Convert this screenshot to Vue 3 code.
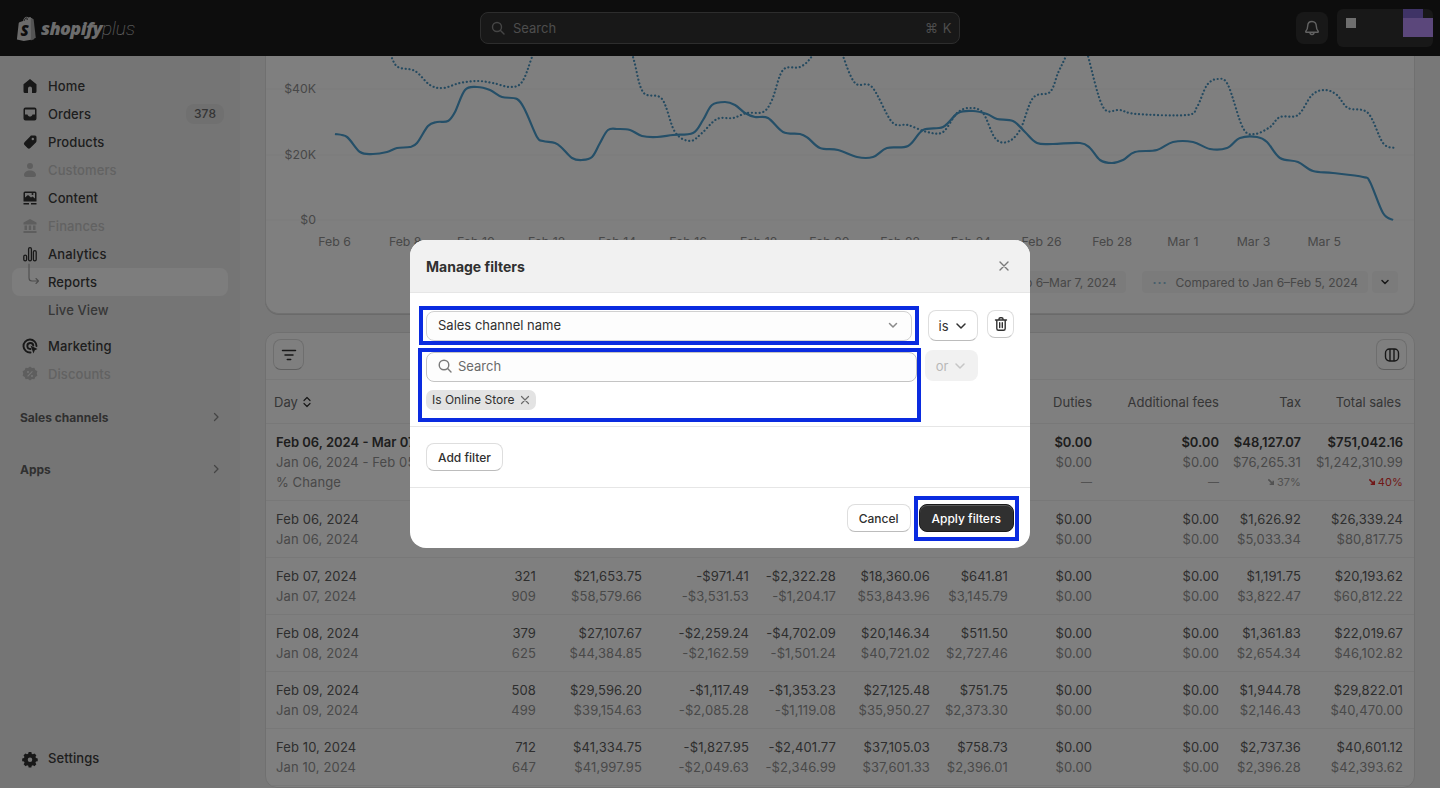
<template>
  <div class="app">
    <header class="topbar">
      <div class="logo">
        <svg class="logo-bag" width="22" height="25" viewBox="0 0 22 25">
          <path d="M3.4 6.2 7 5c.6-2.500 2-4.300 3.800-4.300.7 0 1.200.3 1.600.8l1.600-.4c.6 0 .9.300 1.100 1l.8.1c.3 0 .5.200.6.500L18 23.300 7.800 25 .9 23.600 2.700 7.300c.1-.6.300-.9.700-1.100z" fill="#d6d6d6" />
          <path d="M14.800 2.200 17.600 3.300 19.800 21.800 14.900 24.400z" fill="#a8a8a8" />
          <path d="M8.200 4.800c.4-1.600 1.300-2.900 2.400-2.900M11.200 4c0-1-.1-1.700-.4-2.300" fill="none" stroke="#0d0d0d" stroke-width=".8" />
          <text x="4.600" y="20" class="logo-s">S</text>
        </svg>
        <span class="logo-main">shopify</span><span class="logo-plus">plus</span>
      </div>
      <div class="search">
        <svg width="16" height="16" viewBox="0 0 16 16" fill="none" stroke="#8a8a8a" stroke-width="1.400">
          <circle cx="7" cy="7" r="4.500" />
          <path d="M10.500 10.500 14 14" stroke-linecap="round" />
        </svg>
        <span class="search-text">Search</span>
        <span class="search-keys">⌘ K</span>
      </div>
      <div class="top-right">
        <button class="bell">
          <svg width="18" height="18" viewBox="0 0 18 18" fill="none" stroke="#c4c4c4" stroke-width="1.400">
            <path d="M9 2.500c-2.700 0-4.300 2-4.300 4.500 0 2.700-.7 3.900-1.900 5.300-.3.400-.1.900.4.900h11.600c.5 0 .7-.5.4-.9-1.200-1.400-1.900-2.600-1.900-5.300 0-2.500-1.600-4.500-4.300-4.500z" stroke-linejoin="round" />
            <path d="M7 13.500c0 1.200.8 2 2 2s2-.8 2-2" />
          </svg>
        </button>
        <div class="store">
          <span class="store-dot"></span>
          <span class="store-avatar"><i></i><b></b></span>
        </div>
      </div>
    </header>

    <div class="page">
      <aside class="sidebar">
        <nav class="nav">
          <div
            v-for="item in navItems"
            :key="item.label"
            class="nav-item"
            :class="[item.kind, { dim: item.dim, active: item.active }]"
          >
            <svg v-if="item.icon" class="nav-icon" width="20" height="20" viewBox="0 0 20 20">
              <path
                v-for="(p, i) in icons[item.icon]"
                :key="i"
                :d="p.d"
                fill-rule="evenodd"
                :fill="p.line ? 'none' : 'currentColor'"
                :stroke="p.line ? 'currentColor' : 'none'"
                :stroke-width="p.line ? p.line : 0"
                stroke-linecap="round"
                stroke-linejoin="round"
              />
            </svg>
            <span v-else-if="item.kind !== 'section'" class="nav-icon"></span>
            <span class="nav-label">{{ item.label }}</span>
            <span v-if="item.badge" class="nav-badge">{{ item.badge }}</span>
            <svg v-if="item.kind === 'section'" class="nav-chevron" width="12" height="12" viewBox="0 0 12 12" fill="none" stroke="currentColor" stroke-width="1.300">
              <path d="M4.500 2.500 8 6 4.500 9.500" stroke-linecap="round" stroke-linejoin="round" />
            </svg>
          </div>
        </nav>
        <div class="nav-item settings">
          <svg class="nav-icon" width="20" height="20" viewBox="-1 -1.500 22 22">
            <path :d="gear" fill="currentColor" fill-rule="evenodd" />
          </svg>
          <span class="nav-label">Settings</span>
        </div>
      </aside>

      <main class="main">
        <section class="card chart-card">
          <svg class="chart" width="1150" height="196" viewBox="265 56 1150 196">
            <line v-for="t in yTicks" :key="t.label" x1="265" x2="1415" :y1="t.y" :y2="t.y" class="grid-line" />
            <text v-for="t in yTicks" :key="'l' + t.label" x="316" :y="t.y + 3.500" text-anchor="end" class="axis">{{ t.label }}</text>
            <text v-for="t in xTicks" :key="t.label" :x="t.x" y="246" text-anchor="middle" class="axis">{{ t.label }}</text>
            <path :d="prevPath" class="line-prev" />
            <path :d="currPath" class="line-curr" />
          </svg>
          <div class="legend">
            <span class="legend-pill"><i class="dash"></i>Feb 6–Mar 7, 2024</span>
            <span class="legend-pill"><i class="dots">···</i>Compared to Jan 6–Feb 5, 2024</span>
            <span class="legend-more">
              <svg width="12" height="12" viewBox="0 0 12 12" fill="none" stroke="#303030" stroke-width="1.500">
                <path d="M3 4.500 6 7.500 9 4.500" stroke-linecap="round" stroke-linejoin="round" />
              </svg>
            </span>
          </div>
        </section>

        <section class="card table-card">
          <div class="toolbar">
            <button class="tool-btn">
              <svg width="16" height="16" viewBox="0 0 16 16" fill="none" stroke="#303030" stroke-width="1.500">
                <path d="M1.500 3.500h13M4 8h8M6.300 12.500h3.400" stroke-linecap="round" />
              </svg>
            </button>
            <button class="tool-btn">
              <svg width="16" height="16" viewBox="0 0 16 16" fill="none" stroke="#303030" stroke-width="1.400">
                <rect x="1.500" y="2" width="13" height="12" rx="4" />
                <path d="M6 2v12M10 2v12" />
              </svg>
            </button>
          </div>
          <div class="row head">
            <div class="cell first">
              Day
              <svg width="12" height="14" viewBox="0 0 12 14" fill="none" stroke="#303030" stroke-width="1.200">
                <path d="M3 5.500 6 2.500 9 5.500M3 8.500 6 11.500 9 8.500" stroke-linecap="round" stroke-linejoin="round" />
              </svg>
            </div>
            <div v-for="(h, i) in columns" :key="i" class="cell">{{ h }}</div>
          </div>
          <div class="row summary">
            <div class="cell first clipped">
              <div class="strong">Feb 06, 2024 - Mar 07, 2024</div>
              <div class="muted">Jan 06, 2024 - Feb 05, 2024</div>
              <div class="muted">% Change</div>
            </div>
            <div v-for="(c, i) in summary" :key="i" class="cell">
              <div class="strong">{{ c[0] }}</div>
              <div class="muted">{{ c[1] }}</div>
              <div v-if="c[2]" class="change" :class="{ bad: c[3] }">
                <svg v-if="c[2] !== '—'" width="8" height="8" viewBox="0 0 9 9" fill="none" stroke="currentColor" stroke-width="1.800">
                  <path d="M1.500 1.500 7 7M7 3v4H3" />
                </svg>
                {{ c[2] }}
              </div>
            </div>
          </div>
          <div v-for="r in rows" :key="r.day" class="row">
            <div class="cell first">
              <div>{{ r.day }}</div>
              <div class="muted">{{ r.prevDay }}</div>
            </div>
            <div v-for="(v, i) in r.now" :key="i" class="cell">
              <div>{{ v }}</div>
              <div class="muted">{{ r.prev[i] }}</div>
            </div>
          </div>
        </section>
      </main>
    </div>

    <div class="overlay">
      <div class="modal">
        <div class="modal-head">
          <span class="modal-title">Manage filters</span>
          <svg width="14" height="14" viewBox="0 0 14 14" fill="none" stroke="#7a7a7a" stroke-width="1.400">
            <path d="M3 3l8 8M11 3l-8 8" stroke-linecap="round" />
          </svg>
        </div>
        <div class="modal-body">
          <div class="filter-row">
            <div class="select">
              <span>Sales channel name</span>
              <svg width="14" height="14" viewBox="0 0 14 14" fill="none" stroke="#8a8a8a" stroke-width="1.500">
                <path d="M3.500 5.500 7 9l3.500-3.500" stroke-linecap="round" stroke-linejoin="round" />
              </svg>
              <span class="mark mark-select"></span>
            </div>
            <button class="is-btn">
              is
              <svg width="14" height="14" viewBox="0 0 14 14" fill="none" stroke="#303030" stroke-width="1.500">
                <path d="M3 5l4 4 4-4" stroke-linecap="round" stroke-linejoin="round" />
              </svg>
            </button>
            <button class="trash-btn">
              <svg width="16" height="16" viewBox="0 0 16 16" fill="none" stroke="#303030" stroke-width="1.400">
                <path d="M2.500 4h11M6 3.800V3c0-.8.500-1.300 1.300-1.300h1.400c.8 0 1.300.5 1.300 1.300v.8M3.800 4v8.500c0 1 .7 1.800 1.700 1.800h5c1 0 1.700-.8 1.700-1.800V4M6.700 6.800v4.700M9.300 6.800v4.700" stroke-linecap="round" />
              </svg>
            </button>
          </div>
          <div class="value-row">
            <div class="value-col">
              <div class="input">
                <svg width="16" height="16" viewBox="0 0 16 16" fill="none" stroke="#7a7a7a" stroke-width="1.400">
                  <circle cx="7" cy="7" r="4.800" />
                  <path d="M10.600 10.600 14 14" stroke-linecap="round" />
                </svg>
                <span>Search</span>
              </div>
              <span class="chip">
                Is Online Store
                <svg width="10" height="10" viewBox="0 0 10 10" fill="none" stroke="#6a6a6a" stroke-width="1.200">
                  <path d="M1.500 1.500l7 7M8.500 1.500l-7 7" stroke-linecap="round" />
                </svg>
              </span>
              <span class="mark mark-value"></span>
            </div>
            <button class="or-btn">
              or
              <svg width="14" height="14" viewBox="0 0 14 14" fill="none" stroke="#c6c6c6" stroke-width="1.500">
                <path d="M3 5l4 4 4-4" stroke-linecap="round" stroke-linejoin="round" />
              </svg>
            </button>
          </div>
        </div>
        <div class="modal-add">
          <button class="btn">Add filter</button>
        </div>
        <div class="modal-foot">
          <button class="btn">Cancel</button>
          <button class="btn primary">
            Apply filters
            <span class="mark mark-apply"></span>
          </button>
        </div>
      </div>
    </div>
  </div>
</template>

<script setup>
const navItems = [
  { label: 'Home', icon: 'home' },
  { label: 'Orders', icon: 'orders', badge: '378' },
  { label: 'Products', icon: 'tag' },
  { label: 'Customers', icon: 'person', dim: true },
  { label: 'Content', icon: 'content' },
  { label: 'Finances', icon: 'bank', dim: true },
  { label: 'Analytics', icon: 'bars' },
  { label: 'Reports', icon: 'tree', active: true },
  { label: 'Live View', kind: 'sub' },
  { label: 'Marketing', icon: 'target', kind: 'gap' },
  { label: 'Discounts', icon: 'badge', dim: true },
  { label: 'Sales channels', kind: 'section' },
  { label: 'Apps', kind: 'section' }
]

const icons = {
  home: [{ d: 'M10 3 3.500 8.200V15.500A1.500 1.500 0 0 0 5 17H8V12.500A2 2 0 0 1 12 12.500V17H15A1.500 1.500 0 0 0 16.500 15.500V8.200Z' }],
  orders: [{ d: 'M5.500 3.500h9a2 2 0 0 1 2 2v9a2 2 0 0 1-2 2h-9a2 2 0 0 1-2-2v-9a2 2 0 0 1 2-2zM5 5.500v5h2.500c.5 1.500 1.300 2 2.500 2s2-.5 2.500-2H15v-5z' }],
  tag: [{ d: 'M11 3.500h4A1.500 1.500 0 0 1 16.500 5v4a2 2 0 0 1-.6 1.400l-5.600 5.600a2 2 0 0 1-2.800 0l-3-3a2 2 0 0 1 0-2.800l5.600-5.600A2 2 0 0 1 11 3.500zM14 7a1.200 1.200 0 1 0-2.400 0A1.200 1.200 0 1 0 14 7z' }],
  person: [{ d: 'M10 3a3 3 0 1 1 0 6 3 3 0 0 1 0-6zM4 15c0-2.500 2.500-4.500 6-4.500s6 2 6 4.500c0 1-.7 2-2 2H6c-1.300 0-2-1-2-2z' }],
  content: [{ d: 'M5 3.500h10A1.500 1.500 0 0 1 16.500 5v8.500h-13V5A1.500 1.500 0 0 1 5 3.500zM5 5v4.500L8 7l3 2.500 1.500-1L15 10.500V5zM11.500 6a1 1 0 1 0 2 0 1 1 0 0 0-2 0zM3.500 15H9v1.500H3.500zM11 15h5.500v1.500H11z' }],
  bank: [{ d: 'M10 3 16.500 6.500V8.500H3.500V6.500zM4.500 9.500H7V14H4.500zM8.800 9.500h2.400V14H8.800zM13 9.500h2.500V14H13zM3.500 15h13v2h-13z' }],
  bars: [{ d: 'M3.800 12.500a1.400 1.400 0 0 1 2.800 0v3a1.400 1.400 0 0 1-2.800 0zM8.600 5a1.400 1.400 0 0 1 2.800 0v10.500a1.400 1.400 0 0 1-2.800 0zM13.400 8a1.400 1.400 0 0 1 2.800 0v7.500a1.400 1.400 0 0 1-2.800 0z', line: 1.300 }],
  tree: [{ d: 'M9-8V6a3 3 0 0 0 3 3h6.500m-2.500-2.500 2.500 2.500-2.500 2.500', line: 1.100 }],
  target: [
    { d: 'M10.500 16.500a6.500 6.500 0 1 1 6-6.500M10.500 13a3 3 0 1 1 2.800-3.500', line: 1.900 },
    { d: 'M10.500 9.500 17.500 13 14.800 14.300 13.500 17.500z' }
  ],
  badge: [{ d: 'M10 2.500l2 1.400 2.400-.2.900 2.300 2.100 1.200-.6 2.300.6 2.300-2.100 1.200-.9 2.300-2.400-.2-2 1.400-2-1.400-2.400.2-.9-2.300-2.100-1.200.6-2.300-.6-2.300 2.100-1.200.9-2.300 2.400.2zM12 7l-4.800 5 .8.800 4.800-5zM8 7a1 1 0 1 0 0 2 1 1 0 0 0 0-2zM12 11a1 1 0 1 0 0 2 1 1 0 0 0 0-2z' }]
}

const gear = 'M8.500 3h3l.4 1.900 1.300.6 1.700-1 2.100 2.100-1 1.700.6 1.300 1.900.4v3l-1.900.4-.6 1.300 1 1.700-2.100 2.100-1.700-1-1.300.6-.4 1.900h-3l-.4-1.900-1.300-.6-1.700 1-2.100-2.100 1-1.700-.6-1.300L1.400 13v-3l1.900-.4.6-1.300-1-1.700 2.100-2.100 1.700 1 1.300-.6zM10 9a2.500 2.500 0 1 0 0 5 2.500 2.500 0 0 0 0-5z'

const yTicks = [
  { label: '$40K', y: 89 },
  { label: '$20K', y: 155 },
  { label: '$0', y: 220 }
]

const xLabels = ['Feb 6', 'Feb 8', 'Feb 10', 'Feb 12', 'Feb 14', 'Feb 16', 'Feb 18', 'Feb 20', 'Feb 22', 'Feb 24', 'Feb 26', 'Feb 28', 'Mar 1', 'Mar 3', 'Mar 5']
const xTicks = xLabels.map((label, i) => ({ label, x: 334.5 + i * 70.7 }))

const curr = [
  [335,134],[347,137],[360,152],[373,154],[387,152],[397,148],[410,147],[417,143],[428,126],[437,122],[448,121],[455,112],[465,90],[477,87],[490,90],[502,97],[517,99],[525,110],[537,137],[543,141],[555,143],[562,148],[572,158],[582,160],[592,157],[600,143],[608,130],[618,129],[630,130],[642,136],[657,137],[673,135],[693,133],[703,120],[712,105],[725,102],[735,105],[745,113],[755,117],[768,118],[783,132],[800,134],[808,138],[820,148],[838,150],[857,157],[873,157],[887,148],[908,146],[923,130],[943,127],[958,113],[973,111],[987,114],[997,119],[1013,121],[1025,132],[1037,143],[1053,144],[1080,143],[1090,148],[1100,160],[1112,163],[1123,160],[1135,152],[1157,150],[1173,142],[1193,142],[1210,149],[1227,148],[1240,138],[1257,137],[1267,142],[1280,158],[1298,162],[1313,171],[1333,173],[1363,177],[1370,182],[1383,213],[1393,220]
]

const prev = [
  [380,30],[391,56],[398,67],[415,71],[430,85],[443,88],[460,83],[477,81],[493,83],[510,87],[522,82],[532,57],[545,20],[620,20],[633,57],[643,92],[662,99],[675,132],[690,141],[702,133],[717,119],[733,118],[747,113],[763,112],[772,100],[783,70],[800,67],[812,56],[825,30],[835,30],[843,56],[855,83],[872,87],[892,122],[908,125],[927,132],[943,132],[957,113],[970,108],[983,113],[995,138],[1007,142],[1020,130],[1033,98],[1050,92],[1058,73],[1066,56],[1075,35],[1082,35],[1088,56],[1103,107],[1120,110],[1137,114],[1187,115],[1197,107],[1207,85],[1218,79],[1228,85],[1243,128],[1255,134],[1270,127],[1280,117],[1298,115],[1312,95],[1325,90],[1337,95],[1348,108],[1368,113],[1383,143],[1395,148]
]

// catmull-rom through the traced points so the lines stay smooth
function smooth(pts) {
  let d = `M${pts[0][0]} ${pts[0][1]}`
  for (let i = 0; i < pts.length - 1; i++) {
    const a = pts[Math.max(i - 1, 0)]
    const b = pts[i]
    const c = pts[i + 1]
    const e = pts[Math.min(i + 2, pts.length - 1)]
    const c1x = b[0] + (c[0] - a[0]) / 6
    const c1y = b[1] + (c[1] - a[1]) / 6
    const c2x = c[0] - (e[0] - b[0]) / 6
    const c2y = c[1] - (e[1] - b[1]) / 6
    d += `C${c1x.toFixed(1)} ${c1y.toFixed(1)} ${c2x.toFixed(1)} ${c2y.toFixed(1)} ${c[0]} ${c[1]}`
  }
  return d
}

const currPath = smooth(curr)
const prevPath = smooth(prev)

// the first six headers sit behind the dialog
const columns = ['', '', '', '', '', '', 'Duties', 'Additional fees', 'Tax', 'Total sales']

const summary = [
  ['', ''], ['', ''], ['', ''], ['', ''], ['', ''], ['', ''],
  ['$0.00', '$0.00', '—'],
  ['$0.00', '$0.00', '—'],
  ['$48,127.07', '$76,265.31', '37%'],
  ['$751,042.16', '$1,242,310.99', '40%', true]
]

const rows = [
  {
    day: 'Feb 06, 2024', prevDay: 'Jan 06, 2024',
    now: ['', '', '', '', '', '', '$0.00', '$0.00', '$1,626.92', '$26,339.24'],
    prev: ['', '', '', '', '', '', '$0.00', '$0.00', '$5,033.34', '$80,817.75']
  },
  {
    day: 'Feb 07, 2024', prevDay: 'Jan 07, 2024',
    now: ['321', '$21,653.75', '-$971.41', '-$2,322.28', '$18,360.06', '$641.81', '$0.00', '$0.00', '$1,191.75', '$20,193.62'],
    prev: ['909', '$58,579.66', '-$3,531.53', '-$1,204.17', '$53,843.96', '$3,145.79', '$0.00', '$0.00', '$3,822.47', '$60,812.22']
  },
  {
    day: 'Feb 08, 2024', prevDay: 'Jan 08, 2024',
    now: ['379', '$27,107.67', '-$2,259.24', '-$4,702.09', '$20,146.34', '$511.50', '$0.00', '$0.00', '$1,361.83', '$22,019.67'],
    prev: ['625', '$44,384.85', '-$2,162.59', '-$1,501.24', '$40,721.02', '$2,727.46', '$0.00', '$0.00', '$2,654.34', '$46,102.82']
  },
  {
    day: 'Feb 09, 2024', prevDay: 'Jan 09, 2024',
    now: ['508', '$29,596.20', '-$1,117.49', '-$1,353.23', '$27,125.48', '$751.75', '$0.00', '$0.00', '$1,944.78', '$29,822.01'],
    prev: ['499', '$39,154.63', '-$2,085.28', '-$1,119.08', '$35,950.27', '$2,373.30', '$0.00', '$0.00', '$2,146.43', '$40,470.00']
  },
  {
    day: 'Feb 10, 2024', prevDay: 'Jan 10, 2024',
    now: ['712', '$41,334.75', '-$1,827.95', '-$2,401.77', '$37,105.03', '$758.73', '$0.00', '$0.00', '$2,737.36', '$40,601.12'],
    prev: ['647', '$41,997.95', '-$2,049.63', '-$2,346.99', '$37,601.33', '$2,396.01', '$0.00', '$0.00', '$2,396.28', '$42,393.62']
  }
]
</script>

<style>
html,
body {
  margin: 0;
  background: #fff;
}
</style>

<style scoped>
* {
  box-sizing: border-box;
}

button {
  font: inherit;
  padding: 0;
}

.app {
  position: relative;
  width: 1440px;
  height: 788px;
  overflow: hidden;
  display: flex;
  flex-direction: column;
  background: #f1f1f1;
  font-family: Inter, "Liberation Sans", sans-serif;
  font-size: 13px;
  color: #484848;
}

/* top bar */
.topbar {
  height: 56px;
  flex: none;
  display: grid;
  grid-template-columns: 480px 480px 1fr;
  align-items: center;
  background: #1a1a1a;
}

.logo {
  display: flex;
  align-items: center;
  padding-left: 16px;
  color: #d8d8d8;
}

.logo-bag {
  margin-right: 3px;
}

.logo-s {
  font-family: "Open Sans", sans-serif;
  font-size: 15px;
  font-weight: 800;
  font-style: italic;
  fill: #1a1a1a;
}

.logo-main {
  font-family: "Open Sans", sans-serif;
  font-size: 18px;
  font-weight: 800;
  font-style: italic;
  letter-spacing: -0.6px;
}

.logo-plus {
  font-family: Roboto, sans-serif;
  font-size: 19px;
  font-weight: 100;
  font-style: italic;
  color: #e0e0e0;
}

.search {
  height: 32px;
  display: flex;
  align-items: center;
  gap: 7px;
  padding: 0 7px 0 9px;
  background: #303030;
  border: 1px solid #5a5a5a;
  border-radius: 8px;
}

.search-text {
  flex: 1;
  color: #9a9a9a;
}

.search-keys {
  color: #9a9a9a;
  font-size: 13px;
  letter-spacing: 0.5px;
}

.top-right {
  display: flex;
  align-items: center;
  justify-content: flex-end;
}

.bell {
  width: 32px;
  height: 32px;
  display: flex;
  align-items: center;
  justify-content: center;
  background: #303030;
  border: 0;
  border-radius: 8px;
  margin-right: 9px;
}

.store {
  position: relative;
  width: 96px;
  height: 38px;
  margin-right: 7px;
  background: #303030;
  border-radius: 6px;
}

.store-dot {
  position: absolute;
  left: 9px;
  top: 9px;
  width: 10px;
  height: 10px;
  background: #dcdcdc;
}

.store-avatar i {
  position: absolute;
  left: 66px;
  top: 0;
  width: 20px;
  height: 9px;
  background: #7e66cc;
}

.store-avatar b {
  position: absolute;
  left: 66px;
  top: 9px;
  width: 30px;
  height: 19px;
  background: #b68ef6;
}

/* sidebar */
.page {
  flex: 1;
  min-height: 0;
  display: flex;
}

.sidebar {
  width: 240px;
  flex: none;
  display: flex;
  flex-direction: column;
  justify-content: space-between;
  padding: 16px 0;
  background: #ebebeb;
}

.nav-item {
  height: 28px;
  margin: 0 12px;
  padding: 0 4px 0 8px;
  display: flex;
  align-items: center;
  gap: 8px;
  border-radius: 8px;
  color: #3c3c3c;
  font-weight: 550;
  letter-spacing: 0.1px;
}

.nav-item.dim {
  color: #c4c4c4;
}

.nav-item.dim .nav-icon {
  color: #bcbcbc;
}

.nav-icon {
  width: 20px;
  height: 20px;
  flex: none;
  overflow: visible;
  color: #303030;
}

.nav-label {
  flex: 1;
}

.nav-item.active {
  background: #fafafa;
}

.nav-item.active .nav-icon {
  color: #9a9a9a;
}

.nav-item.sub {
  color: #6e6e6e;
  font-weight: 450;
}

.nav-item.gap {
  margin-top: 8px;
}

.nav-item.section {
  margin-top: 15px;
  color: #616161;
  font-size: 12px;
  font-weight: 650;
  letter-spacing: 0;
  padding-right: 6px;
}

.nav-item.section + .section {
  margin-top: 24px;
}

.nav-chevron {
  color: #8a8a8a;
}

.nav-badge {
  min-width: 38px;
  height: 20px;
  line-height: 20px;
  text-align: center;
  background: #e0e0e0;
  border-radius: 8px;
  color: #6a6a6a;
  font-size: 12px;
  font-weight: 450;
}

/* main */
.main {
  flex: 1;
  min-width: 0;
  padding: 0 25px;
  display: flex;
  flex-direction: column;
  gap: 18px;
}

.card {
  width: 1150px;
  background: #fff;
  border: 1px solid #e0e0e0;
  border-radius: 12px;
  overflow: hidden;
}

.chart-card {
  height: 258px;
  flex: none;
  border-top: 0;
  border-radius: 0 0 14px 14px;
  box-shadow: 0 1px 0 #d4d4d4;
}

.chart {
  display: block;
  margin-left: -1px;
}

.grid-line {
  stroke: #f6f6f6;
  stroke-width: 1;
}

.axis {
  font-size: 12.300px;
  fill: #909090;
}

.line-curr {
  fill: none;
  stroke: #4a9fd0;
  stroke-width: 2.200;
}

.line-prev {
  fill: none;
  stroke: #4a94c0;
  stroke-width: 2.200;
  stroke-dasharray: 0.100 3.700;
  stroke-linecap: round;
}

.legend {
  display: flex;
  align-items: center;
  justify-content: flex-end;
  gap: 16px;
  height: 24px;
  margin-top: 18px;
  padding-right: 16px;
}

.legend-pill {
  height: 22px;
  display: flex;
  align-items: center;
  gap: 8px;
  padding: 0 10px;
  background: #f6f6f6;
  border-radius: 4px;
  color: #909090;
  font-size: 12px;
}

.dash {
  width: 12px;
  height: 2px;
  background: #4f9fcb;
}

.dots {
  color: #8fbcd8;
  font-style: normal;
  font-weight: 700;
  letter-spacing: 1px;
}

.legend-more {
  width: 26px;
  height: 22px;
  margin-left: -12px;
  display: flex;
  align-items: center;
  justify-content: center;
  background: #f6f6f6;
  border-radius: 4px;
}

/* table */
.table-card {
  flex: 1;
  min-height: 0;
}

.toolbar {
  height: 47px;
  display: flex;
  align-items: flex-start;
  justify-content: space-between;
  padding: 6px 7px 0;
  border-bottom: 1px solid #f0f0f0;
}

.tool-btn {
  width: 31px;
  height: 31px;
  display: flex;
  align-items: center;
  justify-content: center;
  background: #fff;
  border: 1px solid #dcdcdc;
  border-bottom-color: #bcbcbc;
  border-radius: 8px;
}

.row {
  display: grid;
  grid-template-columns: 164px 96px 106px 107px 87px 94px 78px 84px 127px 82px 102px;
  padding: 8px 11px 8px 10px;
  border-bottom: 1px solid #f0f0f0;
  line-height: 20px;
  color: #5c5c5c;
  letter-spacing: 0.1px;
  white-space: nowrap;
}

.row.head {
  height: 44px;
  padding-top: 12px;
  color: #6c6c6c;
  letter-spacing: 0;
}

.row.head .cell:last-child {
  padding-right: 2px;
}

.head .first {
  margin-left: -2px;
  display: flex;
  align-items: center;
  gap: 3px;
  height: 20px;
}

.cell {
  text-align: right;
  min-width: 0;
}

.cell.first {
  text-align: left;
}

.cell.clipped {
  width: 134px;
  overflow: hidden;
}

.strong {
  font-weight: 600;
  color: #3c3c3c;
  letter-spacing: 0;
}

.muted {
  color: #929292;
}

.change {
  display: flex;
  align-items: center;
  justify-content: flex-end;
  gap: 2px;
  font-size: 11px;
  color: #a4a4a4;
}

.change.bad {
  color: #e23030;
}

/* modal */
.overlay {
  position: absolute;
  inset: 0;
  display: flex;
  align-items: center;
  justify-content: center;
  background: rgba(0, 0, 0, 0.5);
}

.modal {
  width: 620px;
  height: 308px;
  background: #fff;
  border-radius: 16px;
  overflow: hidden;
  display: flex;
  flex-direction: column;
  color: #303030;
}

.modal-head {
  height: 53px;
  flex: none;
  display: flex;
  align-items: center;
  justify-content: space-between;
  padding: 0 19px 0 16px;
  background: #f1f1f1;
  border-bottom: 1px solid #e6e6e6;
}

.modal-title {
  font-size: 14px;
  font-weight: 650;
}

.modal-body {
  height: 134px;
  flex: none;
  padding: 18px 16px 0;
  border-bottom: 1px solid #e6e6e6;
}

.filter-row {
  display: flex;
  align-items: flex-start;
}

.select {
  position: relative;
  width: 486px;
  height: 30px;
  display: flex;
  align-items: center;
  justify-content: space-between;
  padding: 0 11px 2px;
  background: #fdfdfd;
  border: 1px solid #d0d0d0;
  border-radius: 8px;
}

.is-btn,
.or-btn {
  display: flex;
  align-items: center;
  justify-content: center;
  gap: 5px;
  border-radius: 8px;
}

.is-btn {
  width: 50px;
  height: 31px;
  margin-left: 16px;
  margin-top: -1px;
  background: #fff;
  border: 1px solid #dedede;
  border-bottom-color: #bcbcbc;
  color: #303030;
}

.trash-btn {
  width: 27px;
  height: 28px;
  margin-left: 9px;
  margin-top: -1px;
  display: flex;
  align-items: center;
  justify-content: center;
  background: #fff;
  border: 1px solid #dedede;
  border-bottom-color: #c4c4c4;
  border-radius: 8px;
}

.value-row {
  display: flex;
  align-items: flex-start;
  margin-top: 11px;
  gap: 8px;
}

.value-col {
  position: relative;
  width: 491px;
  height: 58px;
}

.input {
  height: 30px;
  display: flex;
  align-items: center;
  gap: 5px;
  padding: 0 11px 3px 10px;
  background: #fdfdfd;
  border: 1px solid #c4c4c4;
  border-radius: 8px;
  color: #6a6a6a;
}

.chip {
  display: flex;
  width: fit-content;
  align-items: center;
  gap: 5px;
  height: 20px;
  margin-top: 8px;
  padding: 0 6px 1px;
  background: #e3e3e3;
  border-radius: 7px;
  font-size: 12px;
}

.or-btn {
  width: 53px;
  height: 31px;
  margin-top: -2px;
  background: #f1f1f1;
  border: 0;
  color: #b8b8b8;
}

.modal-add {
  height: 61px;
  flex: none;
  display: flex;
  align-items: center;
  padding: 0 16px;
  border-bottom: 1px solid #e6e6e6;
}

.modal-foot {
  flex: 1;
  display: flex;
  align-items: center;
  justify-content: flex-end;
  gap: 8px;
  padding: 0 16px;
}

.btn {
  position: relative;
  height: 28px;
  padding: 0 11px;
  background: #fff;
  border: 1px solid #dedede;
  border-bottom-color: #bcbcbc;
  border-radius: 8px;
  color: #303030;
  font-size: 12px;
  font-weight: 550;
}

.btn.primary {
  padding: 0 12px;
  background: #303030;
  border-color: #1a1a1a;
  color: #fff;
  box-shadow: inset 0 1px 0 #5a5a5a;
}

/* the blue highlight frames drawn on top of the screenshot */
.mark {
  position: absolute;
  border: 4px solid #0a2be0;
  pointer-events: none;
}

.mark-select {
  inset: -6px -8px -5px -8px;
}

.mark-value {
  inset: -4px -4px -12px -8px;
}

.mark-apply {
  inset: -9px -6px -10px -6px;
}
</style>
